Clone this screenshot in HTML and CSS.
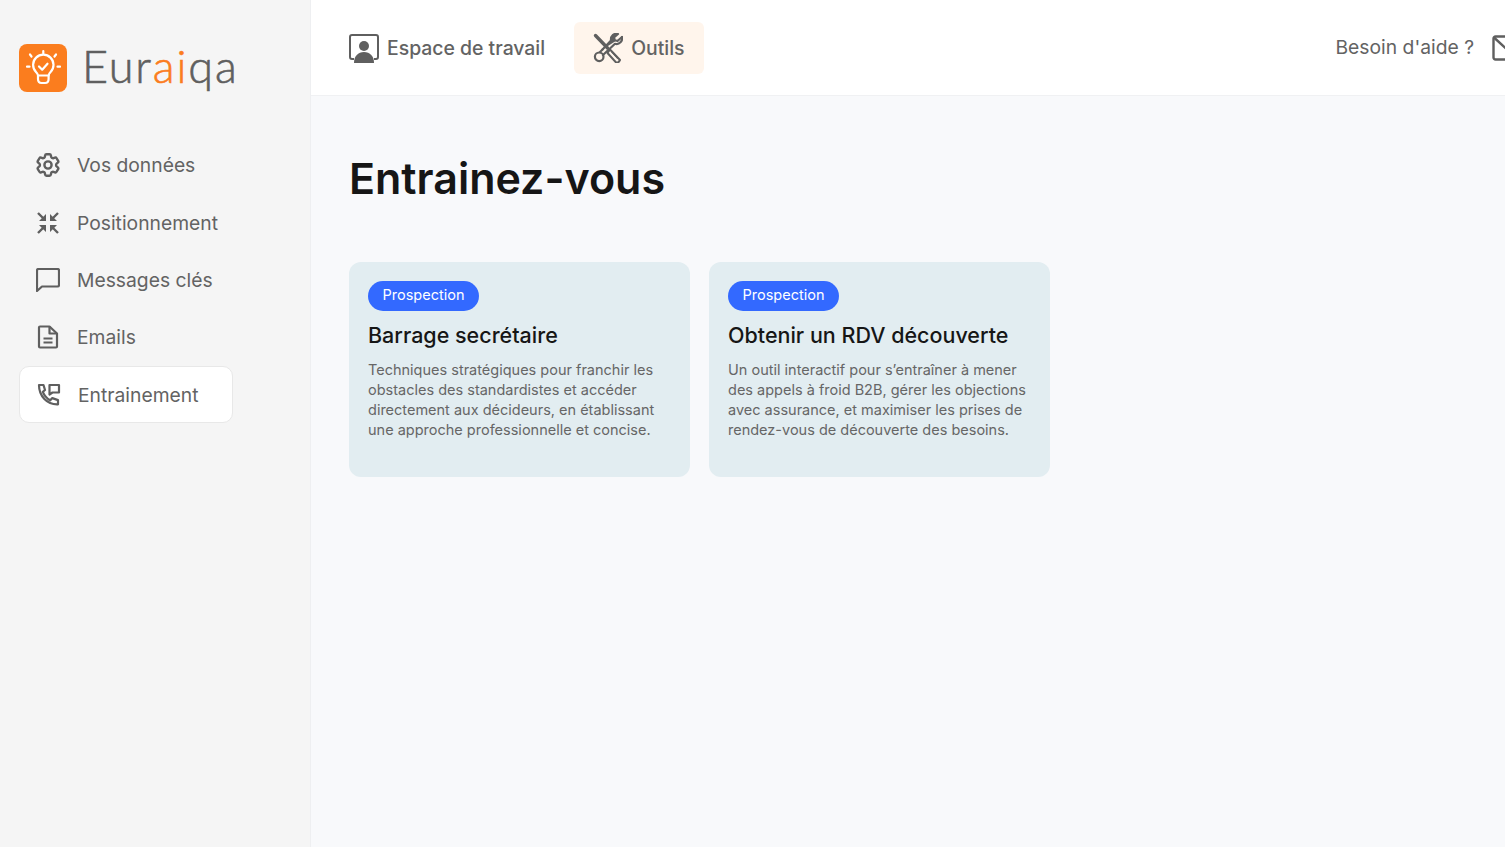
FILE: index.html
```html
<!DOCTYPE html>
<html lang="fr">
<head>
  <meta charset="UTF-8">
  <meta name="viewport" content="width=device-width, initial-scale=1">
  <title>Euraiqa</title>
  <link rel="stylesheet" href="styles.css">
</head>
<body>

<aside class="sidebar">
  <div class="logo">
    <svg class="logo-mark" width="48" height="48" viewBox="0 0 48 48">
      <rect width="48" height="48" rx="8" fill="#fb7d1e"/>
      <g fill="none" stroke="#fff" stroke-width="2.200" stroke-linecap="round" stroke-linejoin="round">
        <path d="M24.300 7v2.500M11 10.500l1.500 2M37 10.500l-1.500 2M8 22.700h2.500M38.500 22.700h2.500"/>
        <path d="M19 31.500c0-1.500-.8-2.300-2-3.500a10.200 10.200 0 1 1 14.600 0c-1.200 1.200-2 2-2 3.500z"/>
        <path d="M19 31.500v3.500c0 2.500 1.500 4 3.500 4h3.600c2 0 3.500-1.500 3.500-4v-3.500"/>
        <path d="M20 22.500l3.200 3.200 5.300-6"/>
      </g>
    </svg>
    <span class="logo-text">Eur<em>ai</em>qa</span>
  </div>

  <nav class="side-nav">
    <a class="side-item">
      <svg width="24" height="24" viewBox="2 2 20 20" fill="none" stroke="#5f5f5f" stroke-width="2" stroke-linecap="round" stroke-linejoin="round"><path d="M9.594 3.940c.09-.542.56-.94 1.110-.94h2.593c.55 0 1.020.398 1.110.94l.213 1.281c.063.374.313.686.645.870.074.040.147.083.22.127.325.196.72.257 1.075.124l1.217-.456a1.125 1.125 0 011.370.49l1.296 2.247a1.125 1.125 0 01-.26 1.431l-1.003.827c-.293.241-.438.613-.43.992a7.723 7.723 0 010 .255c-.008.378.137.75.43.991l1.004.827c.424.35.534.955.26 1.430l-1.298 2.247a1.125 1.125 0 01-1.369.491l-1.217-.456c-.355-.133-.75-.072-1.076.124a6.470 6.470 0 01-.22.128c-.331.183-.581.495-.644.869l-.213 1.281c-.09.543-.56.94-1.110.94h-2.594c-.55 0-1.019-.398-1.110-.94l-.213-1.281c-.062-.374-.312-.686-.644-.87a6.520 6.520 0 01-.22-.127c-.325-.196-.72-.257-1.076-.124l-1.217.456a1.125 1.125 0 01-1.369-.49l-1.297-2.247a1.125 1.125 0 01.26-1.431l1.004-.827c.292-.24.437-.613.43-.991a6.932 6.932 0 010-.255c.007-.38-.138-.751-.43-.992l-1.004-.827a1.125 1.125 0 01-.26-1.430l1.297-2.247a1.125 1.125 0 011.370-.491l1.216.456c.356.133.751.072 1.076-.124.072-.044.146-.086.22-.128.332-.183.582-.495.644-.869l.214-1.280z"/><circle cx="12" cy="12" r="3"/></svg>
      <span>Vos données</span>
    </a>
    <a class="side-item">
      <svg width="24" height="24" viewBox="0 0 24 24" fill="#5f5f5f" stroke="#5f5f5f" stroke-width="2.400"><path d="M2 2l5 5M22 2l-5 5M2 22l5-5M22 22l-5-5" fill="none"/><path d="M10 3v7H3zM14 3v7h7zM10 21v-7H3zM14 21v-7h7z" stroke="none"/></svg>
      <span>Positionnement</span>
    </a>
    <a class="side-item">
      <svg width="24" height="24" viewBox="0 0 24 24" fill="none" stroke="#5f5f5f" stroke-width="2.200" stroke-linejoin="round"><path d="M1 2.500C1 1.700 1.700 1 2.500 1h19c.8 0 1.500.7 1.500 1.500V17c0 .8-.7 1.500-1.500 1.500H6L1 23z"/></svg>
      <span>Messages clés</span>
    </a>
    <a class="side-item">
      <svg width="24" height="24" viewBox="0 0 24 24" fill="none" stroke="#5f5f5f" stroke-width="2.200" stroke-linejoin="round"><path d="M3 2.500c0-.6.400-1 1-1h9.500L21 8.500v13c0 .6-.4 1-1 1H4c-.6 0-1-.4-1-1z"/><path d="M13.500 1.500v7H21M7.500 13.500h9M7.500 17.500h9"/></svg>
      <span>Emails</span>
    </a>
    <a class="side-item active">
      <svg width="24" height="24" viewBox="0 0 24 24" fill="none" stroke="#5f5f5f" stroke-width="2.200" stroke-linejoin="round" stroke-linecap="round"><path d="M2 2h4.500L8 7 5.800 8.800c1.500 3.800 4 6.500 7.500 8.500l2-2.200 5.700 2v4.200C10 21.800 2 13 2 2z"/><path d="M12.500 2H22v7.500h-6.500l-3 2z"/></svg>
      <span>Entrainement</span>
    </a>
  </nav>
</aside>

<div class="main">
  <header class="topbar">
    <a class="top-link">
      <svg width="30" height="30" viewBox="0 0 30 30"><path d="M5 26H3c-1 0-2-.9-2-2V4c0-1 .9-2 2-2h24c1 0 2 .9 2 2v20c0 1.100-1 2-2 2h-2" fill="none" stroke="#5f5f5f" stroke-width="2"/><circle cx="15" cy="13" r="5" fill="#5f5f5f"/><path d="M5 30c0-7 4-11 10-11s10 4 10 11z" fill="#5f5f5f"/></svg>
      <span>Espace de travail</span>
    </a>
    <a class="top-link current">
      <svg width="30" height="30" viewBox="0 0 30 30" fill="none" stroke="#5f5f5f" stroke-linejoin="round" stroke-linecap="round"><path d="M2.500 2.500l12 12.500" stroke-width="3.400"/><path d="M17 16.500l10 10.500c-1 2-2 3-3.500 3L14.500 20z" stroke-width="2"/><path d="M19 19l5.500 6" stroke-width="1.500"/><path d="M29 4l-4.500 4-2.700-.8-.8-2.900L25 1c-4-1-7.500 2-7 6.500L9.500 16.500" stroke-width="2.200" fill="#5f5f5f"/><path d="M29 4c.8 4-2.500 8-7 6.800L10 22" stroke-width="2.200"/><path d="M9.500 16.500L7 19" stroke-width="2.200"/><circle cx="6.200" cy="23.800" r="4.300" stroke-width="2.200"/></svg>
      <span>Outils</span>
    </a>
    <div class="help">
      <span>Besoin d'aide ?</span>
      <svg width="26" height="26" viewBox="0 0 26 26" fill="none" stroke="#5f5f5f" stroke-width="2.400" stroke-linejoin="round"><rect x="1.500" y="1.500" width="23" height="23" rx="2"/><path d="M2 2.500l12 11 11-10"/></svg>
    </div>
  </header>

  <main class="content">
    <h1>Entrainez-vous</h1>
    <div class="cards">
      <article class="card">
        <span class="tag">Prospection</span>
        <h2>Barrage secrétaire</h2>
        <p>Techniques stratégiques pour franchir les obstacles des standardistes et accéder directement aux décideurs, en établissant une approche professionnelle et concise.</p>
      </article>
      <article class="card">
        <span class="tag">Prospection</span>
        <h2>Obtenir un RDV découverte</h2>
        <p>Un outil interactif pour s’entraîner à mener des appels à froid B2B, gérer les objections avec assurance, et maximiser les prises de rendez-vous de découverte des besoins.</p>
      </article>
    </div>
  </main>
</div>

</body>
</html>
```

FILE: styles.css
```css
* {
    margin: 0;
    padding: 0;
    box-sizing: border-box;
}

html, body {
    height: 100%;
    overflow: hidden;
}

body {
    font-family: Inter, "Liberation Sans", sans-serif;
    color: #636363;
    background: #f8f9fb;
    display: flex;
}

.sidebar {
    width: 311px;
    flex-shrink: 0;
    background: #f5f5f5;
    border-right: 1px solid #eeeff1;
    padding: 44px 19px 0;
}

.logo {
    display: flex;
    align-items: center;
    gap: 15px;
    height: 48px;
}

.logo-text {
    font-family: Lato, "Open Sans", sans-serif;
    font-size: 45px;
    font-weight: 300;
    letter-spacing: 1.900px;
    color: #5f5f5f;
    -webkit-text-stroke: 0.6px #5f5f5f;
    line-height: 48px;
    padding-bottom: 4px;
}

.logo-text em {
    font-style: normal;
    color: #fb7d1e;
    -webkit-text-stroke-color: #fb7d1e;
}

.side-nav {
    margin-top: 44.600px;
    width: 214px;
    display: flex;
    flex-direction: column;
}

.side-item {
    display: flex;
    align-items: center;
    gap: 17px;
    height: 57.400px;
    padding-left: 16px;
    font-size: 19.300px;
    border: 1px solid transparent;
    border-radius: 10px;
}

.side-item svg {
    flex-shrink: 0;
}

.side-item.active {
    background: #fff;
    border-color: #e8e8e8;
    height: 57px;
    gap: 17px;
    padding-left: 17px;
}

.main {
    flex: 1;
    min-width: 0;
    display: flex;
    flex-direction: column;
}

.topbar {
    height: 96px;
    flex-shrink: 0;
    background: #fff;
    border-bottom: 1px solid #f0f1f3;
    display: flex;
    align-items: center;
    padding: 0 0 0 28px;
}

.top-link {
    display: flex;
    align-items: center;
    gap: 8px;
    height: 52px;
    padding: 0 20px 0 10px;
    font-size: 19.400px;
    font-weight: 500;
    border-radius: 6px;
}

.top-link.current {
    background: #fff5ec;
    margin-left: 9px;
    padding: 0 19px 0 19px;
}

.help {
    margin-left: auto;
    display: flex;
    align-items: center;
    gap: 18px;
    font-size: 19.300px;
    margin-right: -13px;
}

.help span {
    padding-bottom: 2px;
}

.content {
    flex: 1;
    padding: 55px 38px 0;
}

h1 {
    font-size: 43px;
    font-weight: 600;
    line-height: 54px;
    color: #161616;
}

.cards {
    margin-top: 57px;
    display: flex;
    gap: 19px;
}

.card {
    width: 341px;
    height: 215px;
    background: #e2edf1;
    border-radius: 12px;
    padding: 19px;
}

.tag {
    display: inline-block;
    height: 30px;
    line-height: 28px;
    padding: 0 15px 0 14.500px;
    background: #3369ff;
    color: #fff;
    font-size: 14.500px;
    border-radius: 15px;
}

.card h2 {
    font-size: 21.500px;
    font-weight: 500;
    line-height: 30px;
    color: #161616;
    margin-top: 9px;
}

.card p {
    font-size: 14.500px;
    line-height: 20.250px;
    margin-top: 9.500px;
    color: #666;
}
```
